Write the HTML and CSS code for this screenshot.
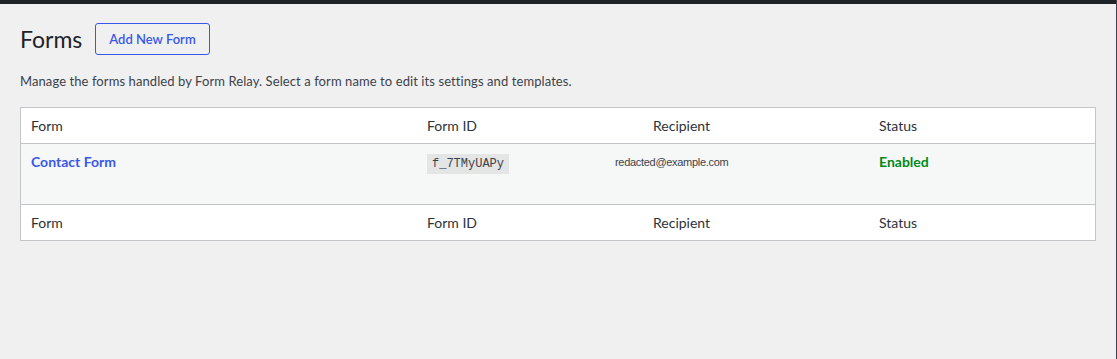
FILE: index.html
```html
<!DOCTYPE html>
<html lang="en">
<head>
  <meta charset="UTF-8" />
  <title>Forms</title>
  <meta name="viewport" content="width=device-width, initial-scale=1" />
  <link rel="stylesheet" href="styles.css">
</head>
<body>
  <div class="topbar"></div>

  <div class="wrap">
    <div class="page-header">
      <h1>Forms</h1>
      <a href="#" class="add-btn">Add New Form</a>
    </div>

    <p class="intro">Manage the forms handled by Form Relay. Select a form name to edit its settings and templates.</p>

    <table class="forms-table">
      <thead>
        <tr>
          <th class="col-name">Form</th>
          <th class="col-id">Form ID</th>
          <th class="col-recipient">Recipient</th>
          <th class="col-status">Status</th>
        </tr>
      </thead>
      <tbody>
        <tr>
          <td><a href="#" class="form-name">Contact Form</a></td>
          <td><code>f_7TMyUAPy</code></td>
          <td><span class="email">redacted@example.com</span></td>
          <td><span class="status-on">Enabled</span></td>
        </tr>
      </tbody>
      <tfoot>
        <tr>
          <th>Form</th>
          <th>Form ID</th>
          <th>Recipient</th>
          <th>Status</th>
        </tr>
      </tfoot>
    </table>
  </div>
</body>
</html>
```

FILE: styles.css
```css
body {
  margin: 0;
  background: #f0f0f1;
  color: #3c434a;
  font-family: Lato, "Noto Sans", sans-serif;
  font-size: 13px;
  min-height: 100vh;
  box-sizing: border-box;
  border-right: 1px solid #3c434a;
}

.topbar {
  height: 4px;
  background: #1d2327;
}

.wrap {
  padding: 0 20px;
}

.page-header {
  display: flex;
  align-items: center;
  gap: 13px;
  margin-top: 19px;
}

h1 {
  margin: 0;
  font-size: 23px;
  font-weight: 400;
  line-height: 30px;
  color: #1d2327;
}

.add-btn {
  display: inline-block;
  box-sizing: border-box;
  height: 32px;
  line-height: 30px;
  padding: 0 13px;
  border: 1px solid #3858e9;
  border-radius: 3px;
  color: #3858e9;
  font-size: 13px;
  font-weight: 600;
  text-decoration: none;
}

.intro {
  margin: 16px 0 16px;
  line-height: 20px;
  letter-spacing: 0.085px;
}

.forms-table {
  width: 100%;
  border-collapse: collapse;
  border: 1px solid #c3c4c7;
  background: #fff;
  table-layout: fixed;
}

.forms-table th {
  text-align: left;
  font-weight: 400;
  font-size: 14px;
  line-height: 19px;
  padding: 8px 10px;
  color: #2c3338;
}

.forms-table thead tr {
  border-bottom: 1px solid #c3c4c7;
}

.forms-table tfoot tr {
  border-top: 1px solid #c3c4c7;
}

.col-name { width: 376px; }
.col-id,
.col-recipient { width: 206px; }

.forms-table tbody tr {
  background: #f6f7f7;
  height: 61px;
}

.forms-table td {
  vertical-align: top;
  padding: 8px 10px;
  font-size: 14px;
  line-height: 20px;
}

.form-name {
  color: #3858e9;
  font-weight: 700;
  text-decoration: none;
}

code {
  display: inline-block;
  padding: 3px 5px;
  background: rgba(0, 0, 0, 0.07);
  font-family: "Liberation Mono", monospace;
  font-size: 12px;
  line-height: 14px;
  color: #3c434a;
}

.email {
  display: block;
  margin: 3px 0 0 -38px;
  font-family: "Liberation Sans", Arial, sans-serif;
  font-size: 11px;
  line-height: 14px;
  letter-spacing: -0.3px;
  color: #3c434a;
}

.status-on {
  color: #008a20;
  font-weight: 700;
}
```
